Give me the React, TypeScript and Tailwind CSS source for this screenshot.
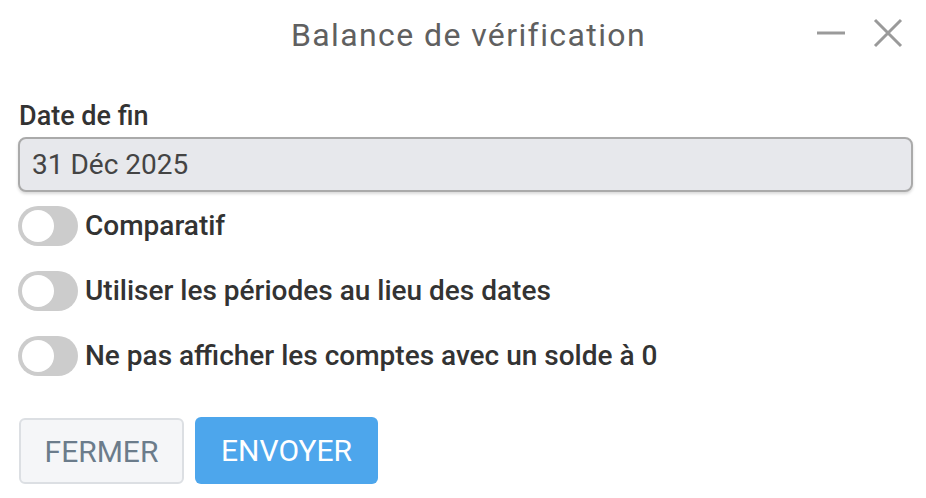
import { useState } from "react";

function Toggle({ label }: { label: string }) {
  const [on, setOn] = useState(false);
  return (
    <label className="flex items-center gap-[7px] h-[40px] cursor-pointer">
      <button
        type="button"
        onClick={() => setOn(!on)}
        className={`relative w-[60px] h-[40px] rounded-full shrink-0 transition-colors ${on ? "bg-[#4da6ec]" : "bg-[#cccccc]"}`}
      >
        <span
          className={`absolute top-[4px] w-[32px] h-[32px] rounded-full bg-white transition-all ${on ? "left-[24px]" : "left-[4px]"}`}
        />
      </button>
      <span className="text-[28px] leading-[40px] font-medium text-[#333333]">{label}</span>
    </label>
  );
}

export default function App() {
  return (
    <div className="w-[926px] h-[498px] bg-white font-['Roboto',sans-serif] pl-[18px] pr-[13px]">
      <div className="relative h-[70px] flex items-center justify-center">
        <h1 className="text-[32px] leading-[40px] tracking-[1.4px] text-[#606060] pl-[6px]">Balance de vérification</h1>
        <div className="absolute right-[10px] top-[18px] flex items-center gap-[27px]">
          <svg width="30" height="30" viewBox="0 0 30 30">
            <path d="M1 15h28" stroke="#9a9a9a" strokeWidth="3" />
          </svg>
          <svg width="30" height="30" viewBox="0 0 30 30">
            <path d="M2 2l26 26M28 2L2 28" stroke="#9a9a9a" strokeWidth="3" />
          </svg>
        </div>
      </div>

      <div className="pt-[29px]">
        <div className="pl-[1px] text-[27px] font-medium text-[#333333] leading-[34px]">Date de fin</div>
        <div className="mt-[4px] h-[55px] flex items-center px-[12px] bg-[#e7e8ec] border-2 border-[#aaaaaa] rounded-[8px] shadow-[0_2px_3px_rgba(0,0,0,0.15)] text-[28px] text-[#444444]">
          31 Déc 2025
        </div>
      </div>

      <div className="flex flex-col gap-[25px] mt-[14px]">
        <Toggle label="Comparatif" />
        <Toggle label="Utiliser les périodes au lieu des dates" />
        <Toggle label="Ne pas afficher les comptes avec un solde à 0" />
      </div>

      <div className="flex gap-[11px] mt-[42px] pl-[1px]">
        <button
          type="button"
          className="w-[165px] h-[66px] rounded-[6px] bg-[#f5f6f8] border-2 border-[#dcdfe3] text-[30px] text-[#6b7c8b]"
        >
          FERMER
        </button>
        <button
          type="button"
          className="w-[183px] h-[67px] -mt-[1px] rounded-[6px] bg-[#4da6ec] text-[30px] text-white"
        >
          ENVOYER
        </button>
      </div>
    </div>
  );
}
